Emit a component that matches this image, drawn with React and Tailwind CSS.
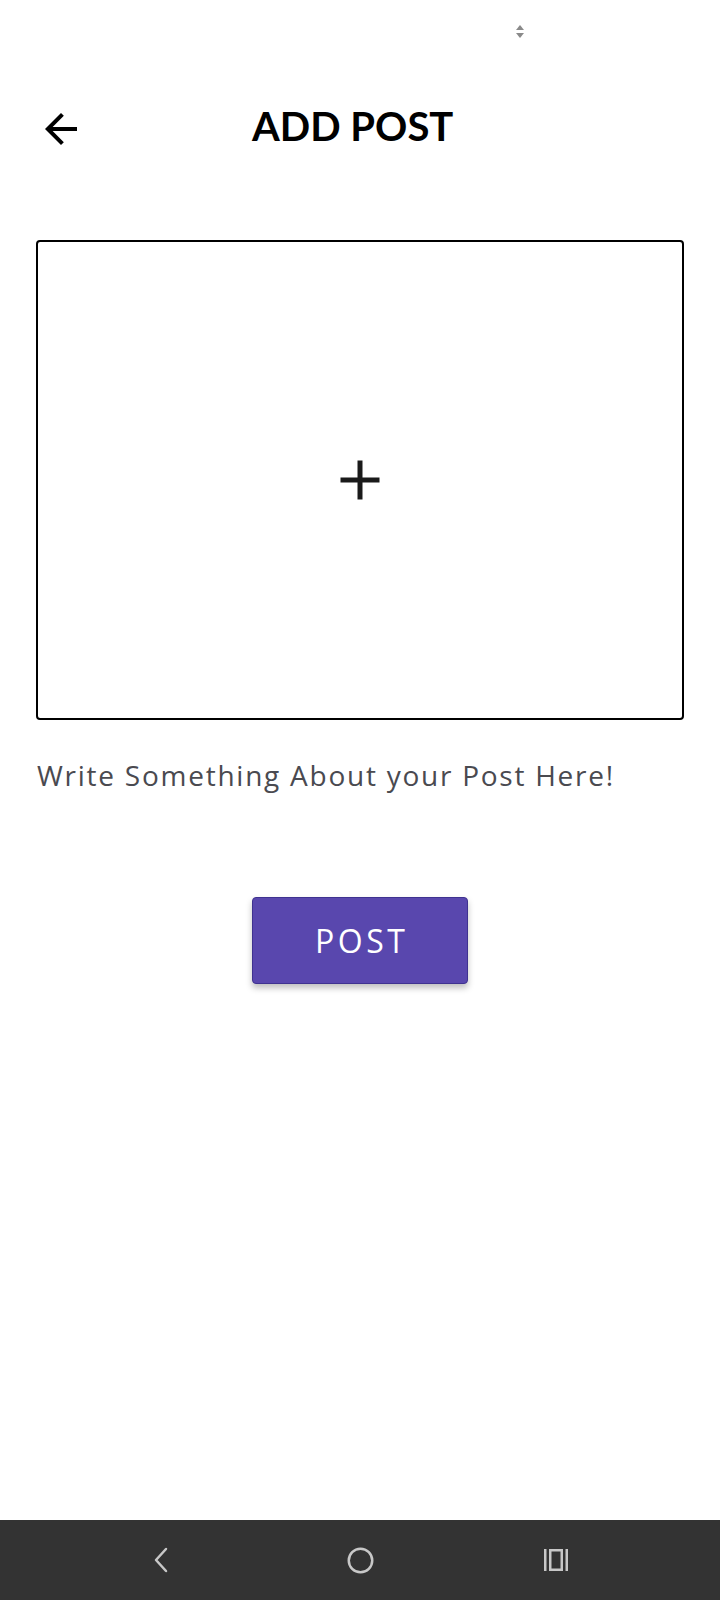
export default function App() {
  return (
    <div
      className="flex min-h-[1600px] w-[720px] flex-col bg-white"
      style={{ fontFamily: "Lato, 'Noto Sans', sans-serif" }}
    >
      {/* status bar */}
      <div className="flex h-[60px] items-start pl-[516px] pt-[25px]">
        <svg width="8" height="13" viewBox="0 0 8 13">
          <path d="M4 0 L8 5 L0 5 Z" fill="#8a8a8a" />
          <path d="M0 8 L8 8 L4 13 Z" fill="#8a8a8a" />
        </svg>
      </div>

      {/* header */}
      <div className="mt-[42px] flex items-start pl-[37px]">
        <button className="mt-[3px] h-[48px] w-[48px]">
          <svg width="48" height="48" viewBox="0 0 24 24">
            <path
              d="M20 11H7.83l5.59-5.59L12 4l-8 8 8 8 1.41-1.41L7.83 13H20v-2z"
              fill="#000"
            />
          </svg>
        </button>
        <h1 className="ml-[167px] text-[40px] leading-[48px] font-bold text-black">
          ADD POST
        </h1>
      </div>

      {/* image picker */}
      <div className="mx-9 mt-[87px] flex h-[480px] items-center justify-center rounded-[4px] border-2 border-black">
        <svg width="40" height="40" viewBox="0 0 40 40">
          <line x1="20" y1="0.5" x2="20" y2="39.5" stroke="#1a1a1a" strokeWidth="5" />
          <line x1="0.5" y1="20" x2="39.5" y2="20" stroke="#1a1a1a" strokeWidth="5" />
        </svg>
      </div>

      {/* caption */}
      <p
        className="mt-[38px] ml-[37px] text-[28px] leading-[34px] tracking-[1.75px] text-[#4a4a50]"
        style={{ fontFamily: "'Open Sans', sans-serif" }}
      >
        Write Something About your Post Here!
      </p>

      {/* post button */}
      <div className="mt-[105px] flex justify-center">
        <button
          className="h-[87px] w-[216px] rounded-[4px] border border-[#3f3290] bg-[#5947ae] pl-[3.5px] text-[32px] tracking-[3.5px] text-white shadow-[0_4px_6px_rgba(0,0,0,0.25)]"
          style={{ fontFamily: "'Open Sans', sans-serif" }}
        >
          POST
        </button>
      </div>

      {/* nav bar */}
      <div className="mt-auto flex h-[80px] items-center bg-[#333333] pl-[141px]">
        <div className="flex w-[40px] justify-center">
          <svg width="18" height="26" viewBox="0 0 18 26">
            <path d="M14 2 L4 13 L14 24" fill="none" stroke="#c8c8c8" strokeWidth="2.5" strokeLinecap="round" strokeLinejoin="round" />
          </svg>
        </div>
        <div className="ml-[159px] flex w-[40px] justify-center">
          <svg width="27" height="27" viewBox="0 0 27 27">
            <circle cx="13.5" cy="13.5" r="11.75" fill="none" stroke="#c8c8c8" strokeWidth="2.5" />
          </svg>
        </div>
        <div className="ml-[156px] flex w-[40px] justify-center">
          <svg width="26" height="22" viewBox="0 0 26 22">
            <rect x="1" y="0" width="2.5" height="22" fill="#c8c8c8" />
            <rect x="7.25" y="1.25" width="11.5" height="19.5" fill="none" stroke="#c8c8c8" strokeWidth="2.5" />
            <rect x="22.5" y="0" width="2.5" height="22" fill="#c8c8c8" />
          </svg>
        </div>
      </div>
    </div>
  );
}
